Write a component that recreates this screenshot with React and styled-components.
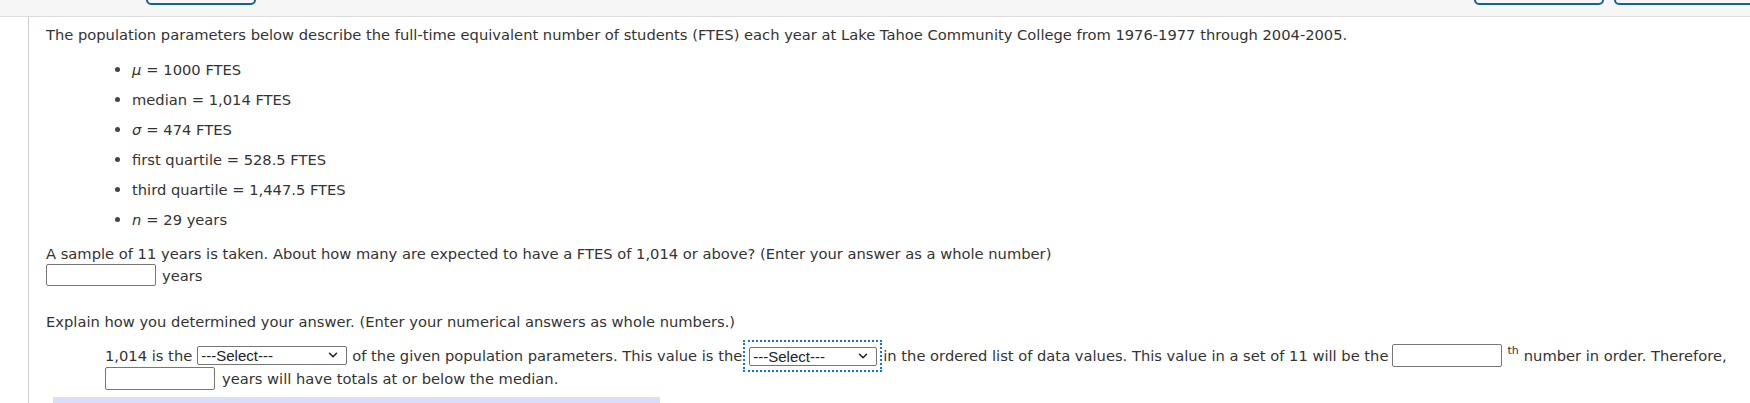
import styled, { createGlobalStyle } from "styled-components";
import { ChevronDown } from "lucide-react";

const Global = createGlobalStyle`
  body {
    margin: 0;
    background: #fff;
    color: #333;
    font-family: "DejaVu Sans", Verdana, sans-serif;
    font-size: 14.7px;
    overflow: hidden;
  }
`;

const TopBar = styled.div`
  height: 16px;
  background: #f6f6f6;
  border-bottom: 1px solid #ddd;
  display: flex;
  align-items: flex-start;
  gap: 10px;
  padding-left: 146px;
  overflow: hidden;
`;

const TabButton = styled.div`
  flex: none;
  width: ${(p) => p.$w}px;
  height: 26px;
  margin-top: -21px;
  margin-right: ${(p) => p.$overhang || 0}px;
  box-sizing: border-box;
  border: 2px solid #13639b;
  border-radius: 5px;
  background: #f6f6f6;
`;

const Spacer = styled.div`
  flex: 1;
`;

const Main = styled.div`
  margin-left: 28px;
  border-left: 1px solid #ccc;
  padding: 7px 0 0 17px;
  height: calc(100vh - 17px);
  box-sizing: border-box;
`;

const Intro = styled.p`
  margin: 0;
  line-height: 22px;
`;

const Params = styled.ul`
  list-style: none;
  margin: 8px 0 10px;
  padding-left: 69px;
`;

const Param = styled.li`
  display: flex;
  align-items: center;
  height: 30px;
`;

const Dot = styled.span`
  width: 5px;
  height: 5px;
  border-radius: 50%;
  background: #444;
  margin-right: 12px;
  flex: none;
`;

const Sym = styled.em`
  font-style: italic;
  margin-right: 5px;
`;

const Question = styled.p`
  margin: 0;
  line-height: 20px;
`;

const InputRow = styled.div`
  display: flex;
  align-items: center;
  gap: 6px;
  height: 22px;
`;

const Field = styled.input`
  flex: none;
  box-sizing: border-box;
  width: ${(p) => p.$w || 110}px;
  height: ${(p) => p.$h || 22}px;
  margin: 0 ${(p) => p.$mr || 0}px 0 ${(p) => p.$ml || 0}px;
  border: 1px solid #767676;
  border-radius: 2px;
  background: #fff;
  padding: 0 4px;
  font: inherit;
`;

const Explain = styled.p`
  margin: 26px 0 0;
  line-height: 20px;
`;

const Answer = styled.div`
  margin: 12px 0 0 59px;
`;

const AnswerLine = styled.div`
  display: flex;
  align-items: center;
  height: 23px;
  white-space: nowrap;
`;

const SelectWrap = styled.span`
  position: relative;
  display: block;
  flex: none;
  margin: 0 ${(p) => p.$gap}px;
`;

const Select = styled.select`
  appearance: none;
  box-sizing: border-box;
  width: ${(p) => p.$w}px;
  height: 19px;
  border: 1px solid #767676;
  border-radius: 2px;
  background: #fff;
  color: #222;
  font-family: "Liberation Sans", Arial, sans-serif;
  font-size: 15px;
  line-height: 17px;
  padding: 0 0 0 3px;
  display: block;
`;

const Chevron = styled(ChevronDown)`
  position: absolute;
  right: 7px;
  top: 2px;
  pointer-events: none;
`;

const Focus = styled.span`
  flex: none;
  display: block;
  margin: 0 1px;
  border: 2px dotted #0a78d6;
  padding: 5px 3px 4px 4px;
`;

const Sup = styled.span`
  align-self: flex-start;
  font-size: 11px;
  line-height: 13px;
  margin: 0 5px;
`;

const Highlight = styled.div`
  margin: 7px 0 0 7px;
  width: 607px;
  height: 8px;
  background: #d8dff6;
`;

const Dropdown = ({ width, gap = 0 }) => (
  <SelectWrap $gap={gap}>
    <Select defaultValue="" $w={width}>
      <option value="">---Select---</option>
    </Select>
    <Chevron size={14} strokeWidth={2.6} color="#222" />
  </SelectWrap>
);

const params = [
  [<Sym key="m">μ</Sym>, "= 1000 FTES"],
  [null, "median = 1,014 FTES"],
  [<Sym key="s">σ</Sym>, "= 474 FTES"],
  [null, "first quartile = 528.5 FTES"],
  [null, "third quartile = 1,447.5 FTES"],
  [<Sym key="n">n</Sym>, "= 29 years"],
];

export default function App() {
  return (
    <>
      <Global />
      <TopBar>
        <TabButton $w={110} />
        <Spacer />
        <TabButton $w={130} />
        <TabButton $w={150} $overhang={-14} />
      </TopBar>
      <Main>
        <Intro>
          The population parameters below describe the full-time equivalent
          number of students (FTES) each year at Lake Tahoe Community College
          from 1976-1977 through 2004-2005.
        </Intro>
        <Params>
          {params.map(([sym, text], i) => (
            <Param key={i}>
              <Dot />
              {sym}
              {text}
            </Param>
          ))}
        </Params>
        <Question>
          A sample of 11 years is taken. About how many are expected to have a
          FTES of 1,014 or above? (Enter your answer as a whole number)
        </Question>
        <InputRow>
          <Field type="text" />
          years
        </InputRow>
        <Explain>
          Explain how you determined your answer. (Enter your numerical answers
          as whole numbers.)
        </Explain>
        <Answer>
          <AnswerLine>
            1,014 is the
            <Dropdown width={150} gap={5} />
            of the given population parameters. This value is the
            <Focus>
              <Dropdown width={128} />
            </Focus>
            in the ordered list of data values. This value in a set of 11 will
            be the
            <Field type="text" $h={23} $ml={4} />
            <Sup>th</Sup>
            number in order. Therefore,
          </AnswerLine>
          <AnswerLine>
            <Field type="text" $h={23} $mr={7} />
            years will have totals at or below the median.
          </AnswerLine>
        </Answer>
        <Highlight />
      </Main>
    </>
  );
}
